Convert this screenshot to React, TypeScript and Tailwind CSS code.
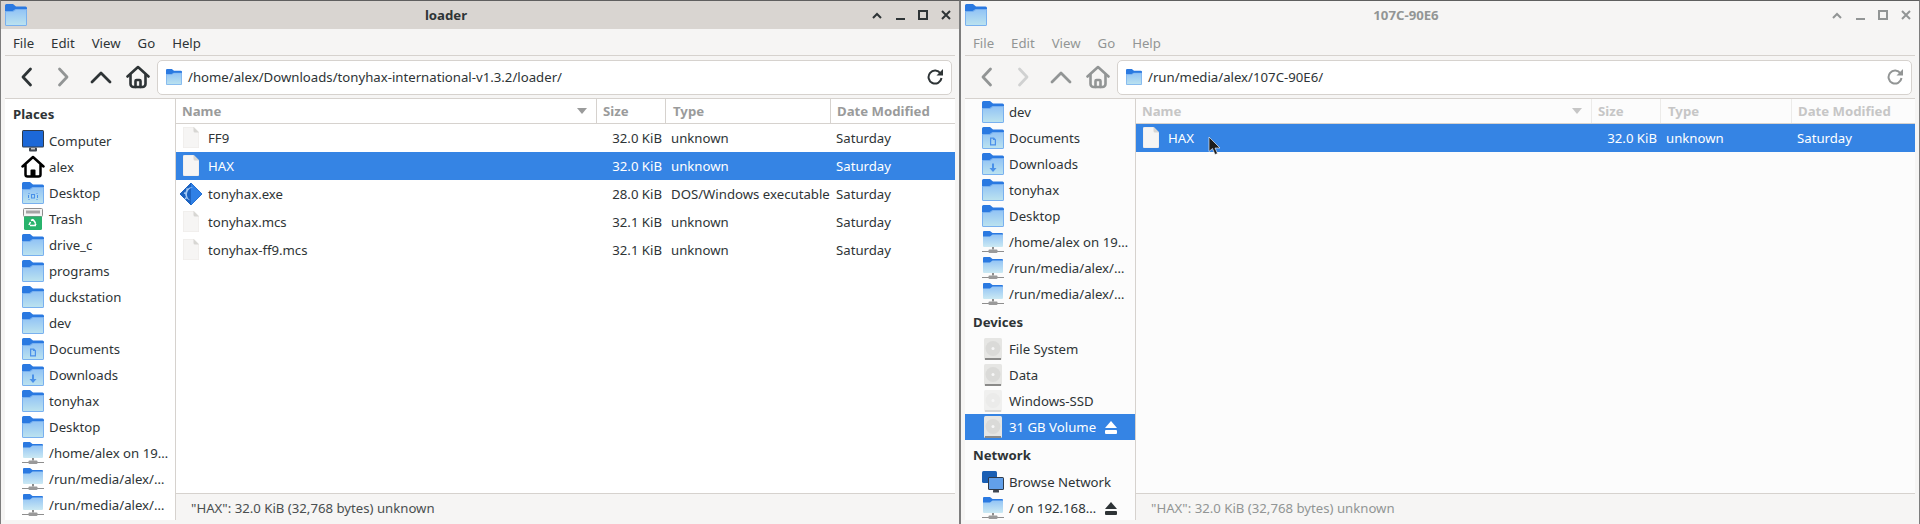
import { useId } from 'react'
import type { ReactNode } from 'react'

type FolderKind = 'plain' | 'desktop' | 'documents' | 'downloads'

function Folder({ kind = 'plain', size = 22 }: { kind?: FolderKind; size?: number }) {
  const id = useId()
  return (
    <svg width={size} height={size} viewBox="0 0 22 22" className="shrink-0">
      <defs>
        <linearGradient id={id} x1="0" y1="0" x2="0" y2="1">
          <stop offset="0" stopColor="#93c4f5" />
          <stop offset="1" stopColor="#bbe2ef" />
        </linearGradient>
      </defs>
      <path d="M0 1.500a1.500 1.500 0 0 1 1.500-1.500h6.500l3 2.500h9.500a1.500 1.500 0 0 1 1.500 1.500v6h-22z" fill="#2a79e1" />
      <path d="M0 7h7.500l3-2h11.500v15.500a1.500 1.500 0 0 1-1.500 1.500h-19a1.500 1.500 0 0 1-1.500-1.500z" fill="#78b0ef" />
      <path d="M1 8h7l3-2h10v14.500a.5.5 0 0 1-.5.5h-19a.5.5 0 0 1-.5-.5z" fill={`url(#${id})`} />
      {kind === 'desktop' && (
        <g fill="none" stroke="#4a90e9" strokeWidth="1">
          <rect x="9.500" y="12.500" width="3" height="3.500" />
          <path d="M6.500 11.500h1M14.500 11.500h1M6.500 17.500h1M14.500 17.500h1M6.500 13v3M15.500 13v3" />
        </g>
      )}
      {kind === 'documents' && <path d="M8 10.500h4l2 2v6h-6zM9.200 11.700v5.600h3.600v-4.200h-1.800v-1.400z" fill="#4a90e9" fillRule="evenodd" />}
      {kind === 'downloads' && <path d="M10 10.500h2v4.500h2.500l-3.500 4-3.500-4h2.500z" fill="#4a90e9" />}
    </svg>
  )
}

function NetFolder() {
  const id = useId()
  return (
    <svg width="22" height="22" viewBox="0 0 22 22" className="shrink-0">
      <defs>
        <linearGradient id={id} x1="0" y1="0" x2="0" y2="1">
          <stop offset="0" stopColor="#93c4f5" />
          <stop offset="1" stopColor="#cbe9f3" />
        </linearGradient>
      </defs>
      <path d="M1 1a1 1 0 0 1 1-1h6l2.500 2h9.500a1 1 0 0 1 1 1v4h-20z" fill="#2a79e1" />
      <path d="M1 5.500h7l2.500-2h10.500v11.500a1 1 0 0 1-1 1h-18a1 1 0 0 1-1-1z" fill={`url(#${id})`} />
      <rect x="10" y="16" width="2" height="2.500" fill="#8e8e8e" />
      <rect x="0" y="20" width="22" height="1" fill="#8e8e8e" />
      <rect x="6.500" y="18.500" width="9" height="3.500" rx="1" fill="#9a9a9a" />
    </svg>
  )
}

function Computer() {
  return (
    <svg width="22" height="22" viewBox="0 0 22 22" className="shrink-0">
      <rect x="0" y="0" width="22" height="17.500" rx="1.500" fill="#2e3a4a" />
      <rect x="1" y="1" width="20" height="15.500" fill="#1c68d8" />
      <rect x="7" y="17.500" width="8" height="4" rx="1" fill="#3f4650" />
      <rect x="9" y="18" width="4" height="1.500" fill="#c9c9c9" />
    </svg>
  )
}

function HomeFilled() {
  return (
    <svg width="24" height="24" viewBox="0 0 24 24" className="shrink-0 -mx-px">
      <path d="M1.500 11.500 12 2l10.500 9.500M4.500 9.500v10a2 2 0 0 0 2 2h11a2 2 0 0 0 2-2v-10" fill="#fff" stroke="#000" strokeWidth="2.500" strokeLinecap="round" strokeLinejoin="round" />
      <path d="M9.500 21.500v-6a1 1 0 0 1 1-1h3a1 1 0 0 1 1 1v6z" fill="#000" />
    </svg>
  )
}

function Trash() {
  return (
    <svg width="22" height="22" viewBox="0 0 22 22" className="shrink-0">
      <rect x="1.500" y=".5" width="19" height="8" rx="1" fill="#f4f4f4" stroke="#8d8d8d" />
      <rect x="4" y="2.500" width="14" height="3" fill="#a4a4a4" />
      <path d="M2 8.500h18v12a1.500 1.500 0 0 1-1.500 1.500h-15a1.500 1.500 0 0 1-1.500-1.500z" fill="#28b36c" />
      <path d="M11 11.500l2.500 3.500M8 17.500h6M8.500 14l-1.500 3M14 17l-1-1.500M9 12.500l2-1" stroke="#fff" strokeWidth="1.500" fill="none" />
    </svg>
  )
}

function Drive({ faded = false }: { faded?: boolean }) {
  return (
    <svg width="22" height="22" viewBox="0 0 22 22" className="shrink-0">
      <rect x="2" y="0" width="18" height="22" rx="1.500" fill={faded ? '#f0f0ef' : '#e6e6e4'} />
      <circle cx="11" cy="10.500" r="7.500" fill={faded ? '#ebebea' : '#dadad8'} />
      <circle cx="11" cy="10.500" r="1.500" fill="#f6f6f6" />
      <rect x="3" y="20.500" width="16" height="1" fill={faded ? '#bcbcbc' : '#2e2e2e'} />
    </svg>
  )
}

function NetworkIcon() {
  return (
    <svg width="22" height="22" viewBox="0 0 22 22" className="shrink-0">
      <rect x="0" y="0" width="15" height="12" rx="1.500" fill="#1a5fb4" />
      <rect x="6" y="6" width="16" height="13" rx="1.500" fill="#2e3a4a" />
      <rect x="7" y="7" width="14" height="11" fill="#62a0ea" />
      <rect x="11" y="19" width="6" height="2.500" rx=".5" fill="#3f4650" />
    </svg>
  )
}

function Eject({ color }: { color: string }) {
  return (
    <svg width="12" height="13" viewBox="0 0 12 13" className="shrink-0 block">
      <path d="M6 0 12 7H0z" fill={color} />
      <rect x="0" y="9" width="12" height="4" rx="1" fill={color} />
    </svg>
  )
}

function DocIcon() {
  return (
    <svg width="16" height="21" viewBox="0 0 16 21" className="shrink-0">
      <path d="M1.500 0H10.500L16 5.500V19.500a1.500 1.500 0 0 1-1.500 1.500h-13A1.500 1.500 0 0 1 0 19.500v-18A1.500 1.500 0 0 1 1.500 0z" fill="#f6f5f4" stroke="#e2dfdb" strokeWidth=".5" />
      <path d="M10.500 0 16 5.500h-4a1.500 1.500 0 0 1-1.500-1.500z" fill="#d7d6d3" />
    </svg>
  )
}

function ExeIcon() {
  return (
    <svg width="22" height="22" viewBox="0 0 22 22" className="shrink-0 -mx-[3px]">
      <path d="M11 0 22 11 11 22 0 11z" fill="#1c62c0" stroke="#1c62c0" strokeLinejoin="round" />
      <path d="M11 0 22 11 11 22z" fill="#2f80e6" />
      <path d="M13 4.500a7 7 0 0 0-2.500 13 6 6 0 0 1 2.500-13z" fill="#a3c9f5" />
      <path d="M8 7 6.500 5.500M6 10.500 4 10M6.500 14.500 5 16" stroke="#a3c9f5" strokeWidth="1.500" />
    </svg>
  )
}

function NavIcon({ d, color, w = 24 }: { d: string; color: string; w?: number }) {
  return (
    <svg width={w} height="24" viewBox={`0 0 ${w} 24`} fill="none" stroke={color} strokeWidth="2.800" strokeLinecap="round" strokeLinejoin="round">
      <path d={d} />
    </svg>
  )
}

function ToolHome({ color }: { color: string }) {
  return (
    <svg width="24" height="24" viewBox="0 0 24 24" fill="none" stroke={color} strokeWidth="2.600" strokeLinecap="round" strokeLinejoin="round">
      <path d="M1.500 11.500 12 2l10.500 9.500" />
      <path d="M4.500 10v9a3 3 0 0 0 3 3h9a3 3 0 0 0 3-3v-9" />
      <path d="M9.500 22v-6a1 1 0 0 1 1-1h3a1 1 0 0 1 1 1v6" />
    </svg>
  )
}

function Reload({ color }: { color: string }) {
  return (
    <svg width="16" height="16" viewBox="0 0 16 16" fill="none" className="shrink-0">
      <path d="M13.500 4.500A6.500 6.500 0 1 0 14.500 9" stroke={color} strokeWidth="2" />
      <path d="M16 0v6.500H9.500z" fill={color} />
    </svg>
  )
}

function WindowButtons({ color }: { color: string }) {
  return (
    <div className="flex pr-[2px]">
      <div className="w-[23px] flex items-center justify-center">
        <svg width="10" height="7" viewBox="0 0 10 7" fill="none" stroke={color} strokeWidth="2"><path d="M1 6 5 2l4 4" /></svg>
      </div>
      <div className="w-[23px] flex items-center justify-center">
        <svg width="10" height="10" viewBox="0 0 10 10" fill={color}><rect x="1" y="7" width="9" height="2" transform="translate(0 1)" /></svg>
      </div>
      <div className="w-[23px] flex items-center justify-center">
        <svg width="10" height="10" viewBox="0 0 10 10" fill="none" stroke={color} strokeWidth="2"><rect x="1" y="1" width="8" height="8" /></svg>
      </div>
      <div className="w-[23px] flex items-center justify-center">
        <svg width="10" height="10" viewBox="0 0 10 10" fill="none" stroke={color} strokeWidth="2"><path d="M1 1l8 8M9 1 1 9" /></svg>
      </div>
    </div>
  )
}

function SideHeader({ label }: { label: string }) {
  return <div className="h-[29px] flex items-center pl-[8px] pt-[2px] font-bold text-[#2e3436]">{label}</div>
}

function SideRow({ icon, label, selected, eject }: { icon: ReactNode; label: string; selected?: boolean; eject?: boolean }) {
  return (
    <div className={`h-[26px] flex items-center pl-[17px] gap-[5px] whitespace-nowrap ${selected ? 'bg-[#3584e4] text-white' : 'text-[#2e3436]'}`}>
      {icon}
      <span className="pt-[2px]">{label}</span>
      {eject && <span className="ml-auto pr-[18px]"><Eject color={selected ? '#ffffff' : '#2e3436'} /></span>}
    </div>
  )
}

type FileRow = { name: string; size: string; type: string; date: string; exe?: boolean; selected?: boolean }

type WindowProps = {
  title: string
  path: string
  active: boolean
  sidebar: ReactNode
  files: FileRow[]
  sizeW: string
  typeW: string
  dateW: string
}

function FileWindow({ title, path, active, sidebar, files, sizeW, typeW, dateW }: WindowProps) {
  const icon = active ? '#2e3436' : '#929595'
  const faded = active ? '#929595' : '#d0d1d1'
  const headText = active ? 'text-[#9a9b9b]' : 'text-[#c6c6c6]'
  const headLine = active ? 'border-[#d6d2ce]' : 'border-[#ecebe9]'
  return (
    <div className="w-[960px] h-full flex flex-col border-x border-t border-x-[#7d7d7d] border-t-[#5f5f5f] bg-[#f6f5f4] text-[13.2px]">
      {/* Title bar */}
      <div className={`h-[28px] flex items-center pl-[4px] ${active ? 'bg-[#d9d5d1]' : 'bg-[#f6f5f4]'}`}>
        <Folder />
        <div className={`flex-1 text-center font-bold pt-[2px] ${active ? 'text-[#2e3436]' : 'text-[#929595]'}`}>{title}</div>
        <WindowButtons color={active ? '#2e3436' : '#929595'} />
      </div>

      <div className="flex-1 flex flex-col px-[4px] pb-[4px] min-h-0">
        {/* Menu */}
        <div className={`h-[27px] flex items-center gap-[17px] pl-[8px] pt-[4px] border-b border-[#d6d2ce] ${active ? 'text-[#2e3436]' : 'text-[#929595]'}`}>
          <span>File</span>
          <span>Edit</span>
          <span>View</span>
          <span>Go</span>
          <span>Help</span>
        </div>

        {/* Toolbar */}
        <div className="h-[43px] flex items-center pl-[4px] pr-[3px] border-b border-[#d6d2ce]">
          <div className="w-[36px] flex justify-center"><NavIcon d="M13.500 4 6 12l7.500 8" color={icon} w={20} /></div>
          <div className="w-[36px] flex justify-center"><NavIcon d="M6.500 4 14 12l-7.500 8" color={faded} w={20} /></div>
          <div className="w-[40px] flex justify-center"><NavIcon d="M3 17 12 8l9 9" color={icon} /></div>
          <div className="w-[34px] flex justify-center"><ToolHome color={icon} /></div>
          <div className="ml-[2px] flex-1 h-[35px] flex items-center pl-[8px] pr-[8px] gap-[6px] rounded-[5px] border border-[#d6d2ce] bg-white text-[#2e3436]">
            <Folder size={16} />
            <span className="flex-1 pt-[2px]">{path}</span>
            <Reload color={icon} />
          </div>
        </div>

        <div className="flex-1 flex min-h-0">
          {/* Sidebar */}
          <div className={`w-[171px] shrink-0 border-r border-[#d6d2ce] overflow-hidden ${active ? 'bg-white' : 'bg-[#fcfcfc]'}`}>
            {sidebar}
          </div>

          {/* File list */}
          <div className={`flex-1 flex flex-col min-w-0 ${active ? 'bg-white' : 'bg-[#fcfcfc]'}`}>
            <div className={`h-[25px] shrink-0 flex items-center border-b border-[#d6d2ce] font-bold ${headText}`}>
              <div className={`flex-1 flex items-center justify-between pl-[6px] pr-[9px] h-full border-r ${headLine}`}>
                <span className="pt-[2px]">Name</span>
                <svg width="10" height="6" viewBox="0 0 10 6" fill={active ? '#9a9b9b' : '#c6c6c6'}><path d="M0 0h10L5 6z" /></svg>
              </div>
              <div className={`${sizeW} h-full flex items-center pl-[6px] pt-[2px] border-r ${headLine}`}>Size</div>
              <div className={`${typeW} h-full flex items-center pl-[7px] pt-[2px] border-r ${headLine}`}>Type</div>
              <div className={`${dateW} h-full flex items-center pl-[6px] pt-[2px]`}>Date Modified</div>
            </div>
            <div className="flex-1">
              {files.map((f) => (
                <div key={f.name} className={`h-[28px] flex items-center whitespace-nowrap ${f.selected ? 'bg-[#3584e4] text-white' : 'text-[#2e3436]'}`}>
                  <div className="flex-1 flex items-center gap-[9px] pl-[7px]">
                    {f.exe ? <ExeIcon /> : <DocIcon />}
                    <span className="pt-[2px]">{f.name}</span>
                  </div>
                  <div className={`${sizeW} text-right pr-[4px] pt-[2px]`}>{f.size}</div>
                  <div className={`${typeW} pl-[5px] pt-[2px]`}>{f.type}</div>
                  <div className={`${dateW} pl-[5px] pt-[2px]`}>{f.date}</div>
                </div>
              ))}
            </div>
            <div className={`h-[27px] shrink-0 flex items-center pl-[15px] pt-[3px] border-t border-[#d6d2ce] bg-[#f6f5f4] ${active ? 'text-[#4a4f50]' : 'text-[#929595]'}`}>
              "HAX": 32.0 KiB (32,768 bytes) unknown
            </div>
          </div>
        </div>
      </div>
    </div>
  )
}

const leftFiles: FileRow[] = [
  { name: 'FF9', size: '32.0 KiB', type: 'unknown', date: 'Saturday' },
  { name: 'HAX', size: '32.0 KiB', type: 'unknown', date: 'Saturday', selected: true },
  { name: 'tonyhax.exe', size: '28.0 KiB', type: 'DOS/Windows executable', date: 'Saturday', exe: true },
  { name: 'tonyhax.mcs', size: '32.1 KiB', type: 'unknown', date: 'Saturday' },
  { name: 'tonyhax-ff9.mcs', size: '32.1 KiB', type: 'unknown', date: 'Saturday' },
]

const rightFiles: FileRow[] = [{ name: 'HAX', size: '32.0 KiB', type: 'unknown', date: 'Saturday', selected: true }]

function LeftSidebar() {
  return (
    <>
      <SideHeader label="Places" />
      <SideRow icon={<Computer />} label="Computer" />
      <SideRow icon={<HomeFilled />} label="alex" />
      <SideRow icon={<Folder kind="desktop" />} label="Desktop" />
      <SideRow icon={<Trash />} label="Trash" />
      <SideRow icon={<Folder />} label="drive_c" />
      <SideRow icon={<Folder />} label="programs" />
      <SideRow icon={<Folder />} label="duckstation" />
      <SideRow icon={<Folder />} label="dev" />
      <SideRow icon={<Folder kind="documents" />} label="Documents" />
      <SideRow icon={<Folder kind="downloads" />} label="Downloads" />
      <SideRow icon={<Folder />} label="tonyhax" />
      <SideRow icon={<Folder />} label="Desktop" />
      <SideRow icon={<NetFolder />} label="/home/alex on 19…" />
      <SideRow icon={<NetFolder />} label="/run/media/alex/…" />
      <SideRow icon={<NetFolder />} label="/run/media/alex/…" />
    </>
  )
}

function RightSidebar() {
  return (
    <>
      <SideRow icon={<Folder />} label="dev" />
      <SideRow icon={<Folder kind="documents" />} label="Documents" />
      <SideRow icon={<Folder kind="downloads" />} label="Downloads" />
      <SideRow icon={<Folder />} label="tonyhax" />
      <SideRow icon={<Folder />} label="Desktop" />
      <SideRow icon={<NetFolder />} label="/home/alex on 19…" />
      <SideRow icon={<NetFolder />} label="/run/media/alex/…" />
      <SideRow icon={<NetFolder />} label="/run/media/alex/…" />
      <SideHeader label="Devices" />
      <SideRow icon={<Drive />} label="File System" />
      <SideRow icon={<Drive />} label="Data" />
      <SideRow icon={<Drive faded />} label="Windows-SSD" />
      <SideRow icon={<Drive />} label="31 GB Volume" selected eject />
      <SideHeader label="Network" />
      <SideRow icon={<NetworkIcon />} label="Browse Network" />
      <SideRow icon={<NetFolder />} label="/ on 192.168…" eject />
    </>
  )
}

export default function App() {
  return (
    <div className="relative flex w-[1920px] h-[524px] overflow-hidden font-['Noto_Sans',sans-serif]">
      <FileWindow
        title="loader"
        path="/home/alex/Downloads/tonyhax-international-v1.3.2/loader/"
        active
        sidebar={<LeftSidebar />}
        files={leftFiles}
        sizeW="w-[69px]"
        typeW="w-[165px]"
        dateW="w-[124px]"
      />
      <FileWindow
        title="107C-90E6"
        path="/run/media/alex/107C-90E6/"
        active={false}
        sidebar={<RightSidebar />}
        files={rightFiles}
        sizeW="w-[69px]"
        typeW="w-[131px]"
        dateW="w-[123px]"
      />
      {/* Mouse pointer over the copied file */}
      <svg width="14" height="20" viewBox="0 0 14 20" className="absolute left-[1208px] top-[137px]">
        <path d="M1 0v14.500l3.500-3 2.500 6 2.500-1-2.500-5.500h5z" fill="#1d1d1d" stroke="#ffffff" strokeWidth=".6" />
      </svg>
    </div>
  )
}
